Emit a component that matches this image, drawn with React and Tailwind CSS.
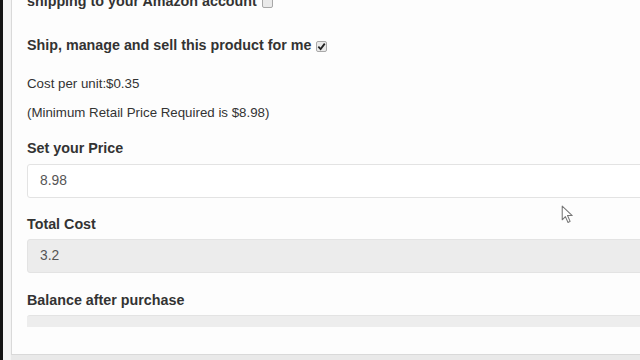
import React from "react";

function Box({ checked }) {
  return (
    <span className="inline-flex items-center justify-center w-[11px] h-[11px] ml-[5px] align-middle rounded-[2px] border border-[#a8a8a8] bg-[#eaeaea]">
      {checked && (
        <svg viewBox="0 0 10 10" className="w-[9px] h-[9px]">
          <path d="M1.5 5.2 L4 7.8 L8.6 1.8" fill="none" stroke="#222" strokeWidth="2" />
        </svg>
      )}
    </span>
  );
}

export default function App() {
  return (
    <div className="w-[640px] h-[360px] overflow-hidden flex bg-[#e9e9e9]" style={{ fontFamily: '"Liberation Sans", Arial, sans-serif' }}>
      <div className="w-[3px] shrink-0 bg-[#111]" />
      <div className="w-[8px] shrink-0 bg-[#f3f3f3]" />
      <div className="relative flex-1 h-[355px] border-l border-b border-[#d9d9d9] bg-[#fdfdfd] pl-[15px] overflow-hidden">
        <div className="mt-[-9px] h-[20px] leading-[20px] text-[14.3px] font-bold text-[#333] whitespace-nowrap">
          shipping to your Amazon account<Box />
        </div>
        <div className="mt-[24px] h-[20px] leading-[20px] text-[14.3px] font-bold text-[#333] whitespace-nowrap">
          Ship, manage and sell this product for me<Box checked />
        </div>
        <div className="mt-[19px] h-[20px] leading-[20px] text-[13.3px] text-[#333]">Cost per unit:$0.35</div>
        <div className="mt-[9px] h-[20px] leading-[20px] text-[13.3px] text-[#333]">(Minimum Retail Price Required is $8.98)</div>

        <div className="mt-[15px] h-[20px] leading-[20px] text-[14.3px] font-bold text-[#333]">Set your Price</div>
        <div className="mt-[6px] h-[34px] w-[700px] flex items-center pl-[12px] text-[13.8px] text-[#555] bg-white border border-[#e3e3e3] rounded-[3px]">8.98</div>

        <div className="mt-[16px] h-[20px] leading-[20px] text-[14.3px] font-bold text-[#333]">Total Cost</div>
        <div className="mt-[5px] h-[34px] w-[700px] flex items-center pl-[12px] text-[13.8px] text-[#555] bg-[#ececec] border border-[#e3e3e3] rounded-[3px]">3.2</div>

        <div className="mt-[17px] h-[20px] leading-[20px] text-[14.3px] font-bold text-[#333]">Balance after purchase</div>
        <div className="mt-[5px] h-[12px] w-[700px] bg-[#ededed] border-t border-[#e3e3e3] rounded-t-[3px]" />

        <svg viewBox="0 0 12 18" className="absolute left-[549px] top-[205px] w-[13px] h-[19px]">
          <path d="M1 1 L1 14 L4 11 L6.5 16.5 L8.5 15.5 L6 10 L10.5 10 Z" fill="#fff" stroke="#777" strokeWidth="1" strokeLinejoin="round" />
        </svg>
      </div>
    </div>
  );
}
